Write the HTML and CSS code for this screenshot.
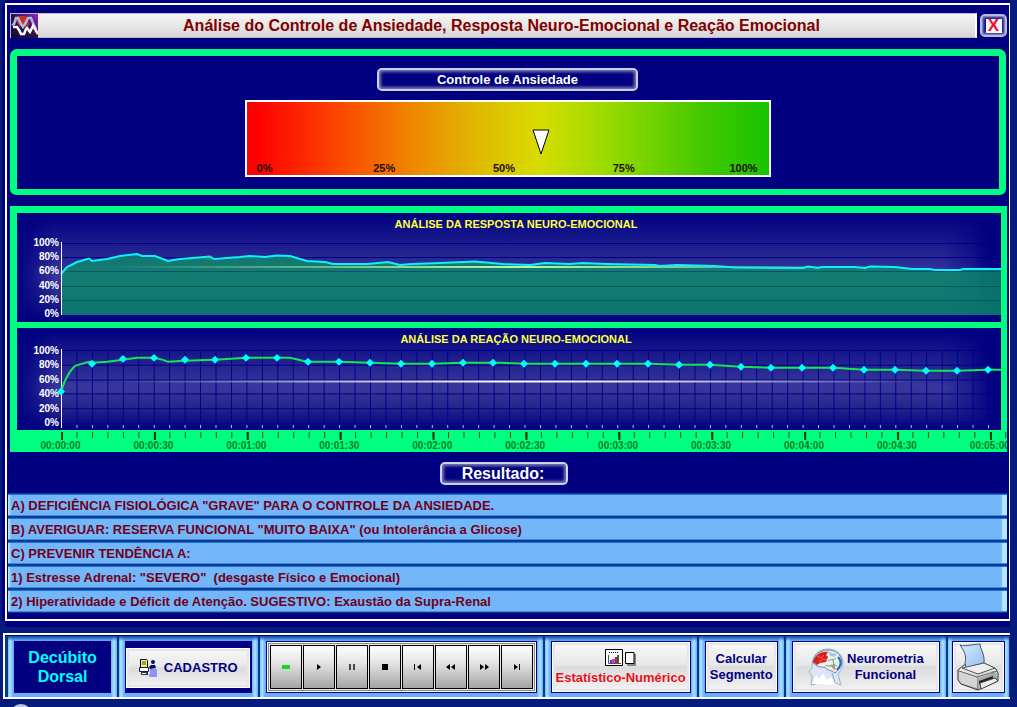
FILE: index.html
```html
<!DOCTYPE html>
<html lang="pt-BR">
<head>
<meta charset="utf-8">
<title>Análise do Controle de Ansiedade</title>
<link rel="stylesheet" href="styles.css">
</head>
<body>
<main class="window">
  <header class="titlebar">
    <div class="title-strip">
      <svg class="logo" viewBox="0 0 27 24" aria-hidden="true">
        <defs><linearGradient id="lg" x1="0" y1="1" x2="1" y2="0"><stop offset="0" stop-color="#100830"/><stop offset=".5" stop-color="#301048"/><stop offset="1" stop-color="#a020c8"/></linearGradient></defs>
        <rect width="27" height="24" fill="url(#lg)"/>
        <path d="M7 2h8l2 3 1 6-3 2-3-3-3 3-4-6z" fill="#c83020"/>
        <path d="M1 11l2-1 2-6h2l3 6 2 3 2-3 3-6h3l2 5 3 6" fill="none" stroke="#a8bce8" stroke-width="2.500"/>
        <path d="M2 13h4l2 3 2 4h3l2-5 1-1 3 4 3-6 2 3 3 5" fill="none" stroke="#fff" stroke-width="2.500"/>
      </svg>
      <h1>Análise do Controle de Ansiedade, Resposta Neuro-Emocional e Reação Emocional</h1>
    </div>
    <button class="close" type="button" aria-label="Fechar"><span>X</span></button>
  </header>

  <section class="gauge-panel">
    <h2 class="badge badge-wide">Controle de Ansiedade</h2>
    <div class="gauge">
      <svg class="pointer" viewBox="0 0 18 26" aria-hidden="true"><path d="M1 1h16L9 25z" fill="#fff" stroke="#000" stroke-width="1"/></svg>
      <div class="gauge-labels"><span>0%</span><span>25%</span><span>50%</span><span>75%</span><span>100%</span></div>
    </div>
  </section>

  <section class="charts">
    <div class="chart chart-response">
      <h3>ANÁLISE DA RESPOSTA NEURO-EMOCIONAL</h3>
      <div class="plot-row">
        <div class="scale"><span>100%</span><span>80%</span><span>60%</span><span>40%</span><span>20%</span><span>0%</span></div>
        <svg class="plot" viewBox="0 0 940 83" preserveAspectRatio="none" aria-hidden="true">
          <defs>
            <linearGradient id="mid" gradientUnits="userSpaceOnUse" x1="0" y1="0" x2="940" y2="0"><stop offset=".05" stop-color="#fff" stop-opacity="0"/><stop offset=".3" stop-color="#fff" stop-opacity=".65"/><stop offset=".48" stop-color="#fff"/><stop offset=".64" stop-color="#fff" stop-opacity=".8"/><stop offset=".92" stop-color="#fff" stop-opacity="0"/></linearGradient>
            <linearGradient id="mid2" gradientUnits="userSpaceOnUse" x1="0" y1="0" x2="940" y2="0"><stop offset=".05" stop-color="#b8f8b0" stop-opacity="0"/><stop offset=".3" stop-color="#a8f0a0" stop-opacity=".6"/><stop offset=".48" stop-color="#b8f8a8"/><stop offset=".66" stop-color="#a8f0a0" stop-opacity=".7"/><stop offset=".85" stop-color="#a0f0a0" stop-opacity="0"/></linearGradient>
          </defs>
          <path d="M0 6.500H940M0 20.500H940" stroke="#000080"/>
          <path d="M0 37L6 30 16 25 28 21.500 31 24 46 22 59 19 76 17 81 19 94 19 107 24 119 22 149 19.500 153 22 179 20 189 19 204 20 216 18.500 229 19 246 24 264 25 272 27 307 27 327 25 339 28 351 27 379 26 414 24.500 442 27 469 28 484 26 509 27 521 26 546 27 594 28 599 29 616 28 654 29 674 30.500 742 31 747 29.500 757 31 761 30 794 30 804 31 809 29.500 834 30 851 32 869 32 874 33 899 33 902 32 940 32V78H0z" fill="#0c9068" fill-opacity=".78"/>
          <path d="M0 34.500H940M0 49.500H940M0 63.500H940" stroke="#005068" stroke-opacity=".8"/>
          <path d="M0 30H940" stroke="url(#mid2)" stroke-width="2"/>
          <path d="M0 37L6 30 16 25 28 21.500 31 24 46 22 59 19 76 17 81 19 94 19 107 24 119 22 149 19.500 153 22 179 20 189 19 204 20 216 18.500 229 19 246 24 264 25 272 27 307 27 327 25 339 28 351 27 379 26 414 24.500 442 27 469 28 484 26 509 27 521 26 546 27 594 28 599 29 616 28 654 29 674 30.500 742 31 747 29.500 757 31 761 30 794 30 804 31 809 29.500 834 30 851 32 869 32 874 33 899 33 902 32 940 32" fill="none" stroke="#0ef0fa" stroke-width="2"/>
          <path d="M.5 5V78" stroke="#fff"/>
        </svg>
      </div>
    </div>
    <div class="chart chart-reaction">
      <h3>ANÁLISE DA REAÇÃO NEURO-EMOCIONAL</h3>
      <div class="plot-row">
        <div class="scale"><span>100%</span><span>80%</span><span>60%</span><span>40%</span><span>20%</span><span>0%</span></div>
        <svg class="plot" viewBox="0 0 940 85" preserveAspectRatio="none" aria-hidden="true">
          <defs>
            <pattern id="cols" width="15.450" height="85" patternUnits="userSpaceOnUse"><path d="M.5 5V80" stroke="#000088"/><path d="M.5 81V84" stroke="#b8b8e8"/></pattern>
            <path id="pt" d="M-4 0L0-4 4 0 0 4z"/>
          </defs>
          <path d="M0 5.500H940M0 20.500H940M0 35.500H940M0 49.500H940M0 64.500H940M0 79.500H940" stroke="#000088"/>
          <rect width="940" height="85" fill="url(#cols)"/>
          <path d="M0 37H940" stroke="url(#mid)" stroke-width="2"/>
          <path d="M.5 4V84" stroke="#fff"/>
          <path d="M0 47L4 36 9 27 14 21 28 17 31 18 46 17 62 15 76 13 93 13 102 15 107 17 123 16 154 15 170 14 185 13 229 13 246 17 278 17 309 18 340 19 371 19 402 18 440 18 464 19 587 19 618 20 649 20 680 22 711 23 773 23 803 25 834 25 865 26 896 26 927 25 940 25" fill="none" stroke="#10e850" stroke-width="2"/>
          <g fill="#0ff">
            <use href="#pt" x="0" y="47"/><use href="#pt" x="31" y="19"/><use href="#pt" x="62" y="14"/><use href="#pt" x="93" y="13"/><use href="#pt" x="124" y="15"/><use href="#pt" x="154" y="15"/><use href="#pt" x="185" y="13"/><use href="#pt" x="216" y="13"/><use href="#pt" x="247" y="17"/><use href="#pt" x="278" y="17"/><use href="#pt" x="309" y="18"/><use href="#pt" x="340" y="19"/><use href="#pt" x="371" y="19"/><use href="#pt" x="402" y="18"/><use href="#pt" x="432" y="18"/><use href="#pt" x="463" y="19"/><use href="#pt" x="494" y="19"/><use href="#pt" x="525" y="19"/><use href="#pt" x="556" y="19"/><use href="#pt" x="587" y="19"/><use href="#pt" x="618" y="20"/><use href="#pt" x="649" y="20"/><use href="#pt" x="680" y="22"/><use href="#pt" x="710" y="23"/><use href="#pt" x="741" y="23"/><use href="#pt" x="772" y="23"/><use href="#pt" x="803" y="25"/><use href="#pt" x="834" y="25"/><use href="#pt" x="865" y="26"/><use href="#pt" x="896" y="26"/><use href="#pt" x="927" y="25"/>
          </g>
        </svg>
      </div>
    </div>
    <div class="time-axis">
      <svg class="ticks" viewBox="0 0 946 10" preserveAspectRatio="none" aria-hidden="true">
        <defs>
          <pattern id="minor" width="15.480" height="10" patternUnits="userSpaceOnUse"><path d="M.5 2V8" stroke="#205008"/></pattern>
          <pattern id="major" width="92.900" height="10" patternUnits="userSpaceOnUse"><path d="M1 2V10" stroke="#103808" stroke-width="2"/></pattern>
        </defs>
        <rect width="946" height="10" fill="url(#minor)"/><rect width="946" height="10" fill="url(#major)"/>
      </svg>
      <div class="times"><span>00:00:00</span><span>00:00:30</span><span>00:01:00</span><span>00:01:30</span><span>00:02:00</span><span>00:02:30</span><span>00:03:00</span><span>00:03:30</span><span>00:04:00</span><span>00:04:30</span><span>00:05:00</span></div>
    </div>
  </section>

  <h2 class="badge badge-result">Resultado:</h2>
  <ul class="results">
    <li>A) DEFICIÊNCIA FISIOLÓGICA "GRAVE" PARA O CONTROLE DA ANSIEDADE.</li>
    <li>B) AVERIGUAR: RESERVA FUNCIONAL "MUITO BAIXA" (ou Intolerância a Glicose)</li>
    <li>C) PREVENIR TENDÊNCIA A:</li>
    <li>1) Estresse Adrenal: "SEVERO"  (desgaste Físico e Emocional)</li>
    <li>2) Hiperatividade e Déficit de Atenção. SUGESTIVO: Exaustão da Supra-Renal</li>
  </ul>
</main>

<nav class="toolbar">
  <div class="cell"><div class="well posture">Decúbito<br>Dorsal</div></div>
  <div class="cell cell-register"><div class="well">
    <button class="btn btn-register" type="button">
      <svg width="18" height="18" viewBox="0 0 18 18" aria-hidden="true">
        <path d="M1.500 .500h6l1 1v7h-7z" fill="#f8f070" stroke="#000"/><path d="M3 3h4M3 5h4" stroke="#444"/>
        <path d="M.5 8.500h9v4h-9z" fill="#fff" stroke="#102040"/><path d="M2 13h7v3H2z" fill="#203858"/><path d="M3 14.500h4" stroke="#fff"/>
        <circle cx="14" cy="3" r="2" fill="#080850"/><path d="M10 8l2-2h4l1 3-6 1z" fill="#080850"/>
        <path d="M11 10h7v8h-8v-3h1z" fill="#9090ff"/>
      </svg>
      CADASTRO</button>
  </div></div>
  <div class="cell"><div class="well player">
    <button type="button" aria-label="Gravar"><svg viewBox="0 0 12 8"><path d="M2 2h8v4H2z" fill="#10d830"/></svg></button>
    <button type="button" aria-label="Reproduzir"><svg viewBox="0 0 12 8"><path d="M4 1v6l4-3z"/></svg></button>
    <button type="button" aria-label="Pausar"><svg viewBox="0 0 12 8"><path d="M3 1h2v6H3zM7 1h2v6H7z" fill="#444"/></svg></button>
    <button type="button" aria-label="Parar"><svg viewBox="0 0 12 8"><path d="M3 1h6v6H3z"/></svg></button>
    <button type="button" aria-label="Início"><svg viewBox="0 0 12 8"><path d="M2 1h1v6H2zM9 1v6L5 4z"/></svg></button>
    <button type="button" aria-label="Retroceder"><svg viewBox="0 0 12 8"><path d="M5 1v6L1 4zM10 1v6L6 4z"/></svg></button>
    <button type="button" aria-label="Avançar"><svg viewBox="0 0 12 8"><path d="M2 1v6l4-3zM7 1v6l4-3z"/></svg></button>
    <button type="button" aria-label="Fim"><svg viewBox="0 0 12 8"><path d="M3 1v6l4-3zM8 1h1v6H8z"/></svg></button>
  </div></div>
  <div class="cell"><div class="well">
    <button class="btn btn-stats" type="button">
      <svg width="32" height="18" viewBox="0 0 32 18" aria-hidden="true">
        <path d="M.5 .500h17v16H.5z" fill="#fff" stroke="#000"/><path d="M4 3.500h10" stroke="#000" stroke-dasharray="1 1"/>
        <path d="M3.500 6v8.500H16" stroke="#555" fill="none"/><path d="M5 11h2v3H5z" fill="#4040d0"/><path d="M7 10h3v4H7z" fill="#d040d0"/><path d="M10 8h2v6h-2z" fill="#e01030"/><path d="M12 6h2v8h-2z" fill="#107830"/>
        <path d="M22 5h9v12h-9z" fill="#888"/><path d="M20.500 3.500h8.500v11h-8.500z" fill="#fff" stroke="#000"/>
      </svg>
      <span>Estatístico-Numérico</span></button>
  </div></div>
  <div class="cell"><div class="well"><button class="btn" type="button">Calcular<br>Segmento</button></div></div>
  <div class="cell"><div class="well">
    <button class="btn btn-neuro" type="button">
      <svg width="36" height="38" viewBox="0 0 36 38" aria-hidden="true">
        <path d="M3 37l1-9-3-4 3-4C3 8 10 1 20 1c9 0 15 6 15 14 0 5-3 8-5 11l3 11-12-4z" fill="#dce6f4" stroke="#9cb4d8"/>
        <path d="M5 15C6 6 13 2 20 2c8 0 13 5 14 11 0 6-4 9-7 12-3-3-8-2-10-6-4 1-9-1-12-4z" fill="#eef0ee" stroke="#6888a8"/>
        <path d="M5 14C7 7 13 3 20 4l-2 3 2 2-2 5-6 1-3 2z" fill="#d82018"/><path d="M9 8l4 2 3-3M11 14l4-3 4 1" stroke="#f86858" fill="none"/>
        <path d="M20 3l4 2 5 1-2 3-5-1z" fill="#a8c8e8"/><path d="M20 13c3-3 6 0 8-3M18 17c4 3 7-2 11 1M25 12l2 10" stroke="#48a878" stroke-width="1" fill="none"/>
        <path d="M30 9c4 4 3 9-1 13" stroke="#2868b8" stroke-width="2" fill="none"/><path d="M23 17l4 4" stroke="#e08068" stroke-width="2"/>
        <path d="M4 36l4-9 3 4 4-6 4 7 4-3 5 8z" fill="#fff"/><path d="M24 25l3 9" stroke="#80a0c8"/>
      </svg>
      <span>Neurometria<br>Funcional</span></button>
  </div></div>
  <div class="cell cell-print"><div class="well">
    <button class="btn" type="button" aria-label="Imprimir">
      <svg width="44" height="48" viewBox="0 0 44 48" aria-hidden="true">
        <defs><linearGradient id="paper" x1="0" y1="0" x2="1" y2="1"><stop offset="0" stop-color="#d8ebff"/><stop offset="1" stop-color="#90bff5"/></linearGradient><linearGradient id="body" x1="0" y1="0" x2="0" y2="1"><stop offset="0" stop-color="#f8f8f8"/><stop offset="1" stop-color="#aaa"/></linearGradient></defs>
        <path d="M8 22l5-1h17l10 5 2 4v8L22 47 5 41 2 37V27z" fill="url(#body)" stroke="#333"/>
        <path d="M9 20c2-7-1-12-5-18 6 2 13-1 20-1 0 5 5 10 4 19l-18 5z" fill="url(#paper)" stroke="#456"/>
        <path d="M6 25l22-5 11 5-17 6z" fill="#eee" stroke="#555"/><path d="M3 28l18 6v12M21 34l20-6" fill="none" stroke="#666"/>
        <path d="M3 29l18 6v10L5 40l-2-4z" fill="#d4d4d4"/><path d="M22 35l18-6 1 7-19 9z" fill="#aaa"/>
        <path d="M23 38l14-5v3l-14 5z" fill="#222"/><path d="M24 40l15-5 3 3-17 8z" fill="#eee" stroke="#444"/>
        <path d="M35 30l3-1" stroke="#30c030" stroke-width="2"/>
      </svg></button>
  </div></div>
</nav>
<footer class="strip"><span class="orb"></span></footer>
</body>
</html>
```

FILE: styles.css
```css
* { box-sizing: border-box; }
body {
  margin: 0;
  background: #061c7c;
  font-family: "Liberation Sans", Arial, sans-serif;
  font-weight: bold;
}
h1, h2, h3, ul { margin: 0; padding: 0; font-weight: bold; }
button { font: inherit; margin: 0; padding: 0; cursor: pointer; }

.window {
  margin: 3px 7px 0 5px;
  padding: 8px 2px 6px 3px;
  border: 2px solid #fff;
  border-right-width: 1px;
  background: #000080;
  box-shadow: -3px 0 #000080, 0 -3px #000080, 0 6px #000080;
  display: flex;
  flex-direction: column;
}

.titlebar { display: flex; align-items: center; gap: 3px; }
.title-strip {
  flex: 1;
  height: 25px;
  display: flex;
  align-items: center;
  background: linear-gradient(#f6f6f6, #e4e4e4 60%, #d6d6d6);
  border: 1px solid #b8b8d0;
  border-right: 2px solid #fff;
}
.logo { width: 27px; height: 24px; flex: none; }
.title-strip h1 { flex: 1; text-align: center; padding-right: 10px; font-size: 16px; line-height: 23px; color: #800000; }
.close {
  width: 27px;
  height: 23px;
  background: #000080;
  border: 2px solid #b8b8e0;
  border-radius: 5px;
  box-shadow: inset 0 0 0 1px #8080b8, inset 0 0 3px 2px #7070b0;
  padding: 2px 3px;
}
.close span { display: block; width: 16px; margin: 0 auto; line-height: 14px; background: #f4f4fa; color: #f01030; font-size: 17px; }

.gauge-panel {
  margin: 11px 1px 0 0;
  height: 146px;
  border: 7px solid #00ff80;
  border-bottom-width: 6px;
  border-radius: 7px 7px 6px 6px;
  padding: 12px 1px 0 0;
}
.badge {
  height: 23px;
  margin: 0 auto;
  border: 2px solid #d0d0e8;
  border-radius: 5px;
  box-shadow: inset 0 0 3px 2px #7878b4;
  color: #fff;
  text-align: center;
  line-height: 19px;
}
.badge-wide { width: 261px; font-size: 13px; }
.badge-result { width: 128px; font-size: 16px; align-self: center; margin: 10px 9px 8px 0; padding-right: 2px; }
.gauge {
  width: 526px;
  height: 77px;
  margin: 9px auto 0;
  border: 2px solid #fff;
  background: linear-gradient(90deg, #ff0000 2%, #fa5200 20%, #ee8800 32%, #e0b800 44%, #d8dc00 56%, #a8dc00 66%, #78d400 76%, #40c800 88%, #18c400);
  display: flex;
  flex-direction: column;
  justify-content: space-between;
}
.pointer { width: 18px; height: 26px; margin: 27px 0 0 54.6%; }
.gauge-labels {
  display: flex;
  justify-content: space-between;
  padding: 0 8px 0 1px;
  font-size: 11px;
  line-height: 14px;
  color: #1c1000;
  text-align: center;
}
.gauge-labels span { width: 34px; }

.charts { margin-top: 11px; background: #00ff80; padding-top: 7px; overflow: hidden; }
.chart {
  margin: 0 6px 6px 7px;
  padding-top: 5px;
  background:
    radial-gradient(ellipse 60px 110px at 100% 35%, #000080, #00008000),
    linear-gradient(90deg, #000080, #00008000 4%, #00008000 97%, #000080),
    linear-gradient(#000080, #38389c 58%, #22228c 80%, #000080);
}
.chart-response { height: 109px; }
.chart-reaction { height: 102px; margin-bottom: 0; }
.chart h3 { font-size: 11px; line-height: 12px; padding-left: 14px; text-align: center; color: #ffff40; }
.plot-row { display: flex; height: 84px; }
.chart-response .plot-row { height: 83px; margin-top: 7px; }
.scale { width: 44px; padding-right: 2px; display: flex; flex-direction: column; justify-content: space-between; text-align: right; font-size: 10px; line-height: 12px; color: #fff; }
.plot { flex: 1; min-width: 0; height: 100%; overflow: visible; }
.time-axis { height: 22px; }
.ticks { display: block; height: 10px; width: 100%; padding-left: 51px; }
.times { display: grid; grid-template-columns: repeat(11, 9.360%); padding-left: 4px; font-size: 10px; line-height: 11px; color: #008020; text-align: center; }

.results { list-style: none; margin-left: -2px; }
.results li {
  height: 24px;
  padding-left: 3px;
  font-size: 13px;
  line-height: 23px;
  color: #700018;
  white-space: pre;
  overflow: hidden;
  border-top: 1px solid #0840a0;
  background:
    linear-gradient(90deg, #b0e4ff 1px, #b0e4ff00 3px calc(100% - 6px), #b8e8ff calc(100% - 4px)),
    #74b6fa;
  box-shadow: inset 0 1px #2070d8, inset 0 -1px #083888, inset 0 -2px #4888d8;
}

.toolbar {
  margin: 12px 7px 0 3px;
  border: 2px solid #fff;
  border-right: 0;
  background: #083888;
  padding: 1px 1px 0 3px;
  display: grid;
  grid-template-columns: 109fr 139fr 282fr 152fr 85fr 160fr 61fr;
  gap: 2px;
  box-shadow: inset 0 1px #000060;
}
.cell {
  min-width: 0;
  height: 61px;
  padding: 5px 6px 4px;
  background:
    linear-gradient(#0848a8, #0848a800 5px),
    linear-gradient(90deg, #78b8f8, #b0e4ff 2px, #68b0fa 5px calc(100% - 6px), #b0e4ff calc(100% - 3px), #68b0fa);
}
.cell-print { padding: 5px 4px 4px; }
.well { height: 52px; background: #000080; padding: 1px; display: flex; }
.posture { display: block; text-align: center; padding-top: 7px; font-size: 16px; line-height: 19px; color: #0ff; }
.cell-register .well { padding: 7px 2px 5px 1px; }
.btn {
  width: 100%;
  border: 1px solid #fff;
  box-shadow: inset 0 0 0 2px #e6e6ea;
  background: linear-gradient(#f8f8f8, #e8e8e8 45%, #dcdcdc 50%, #f2f2f2);
  color: #000080;
  font-size: 13px;
  line-height: 16px;
  display: flex;
  align-items: center;
  justify-content: center;
  white-space: nowrap;
}
.btn-register { gap: 7px; }
.btn-stats { flex-direction: column; color: #e81020; gap: 3px; }
.btn-neuro { gap: 3px; }
.player { padding: 3px; gap: 1px; border: 1px solid #000080; background: #e8e8e8; box-shadow: inset 0 0 0 1px #fff, inset 0 0 0 2px #888; }
.player button {
  flex: 1;
  border: 1px solid #000;
  background: linear-gradient(#fff, #e4e4e4 40%, #a4a4a4);
  display: flex;
  align-items: center;
  justify-content: center;
}
.player svg { width: 12px; height: 8px; }

.strip { height: 8px; overflow: hidden; padding: 5px 0 0 10px; }
.orb { display: block; width: 22px; height: 22px; border-radius: 50%; background: #b8c8e8; }
```
